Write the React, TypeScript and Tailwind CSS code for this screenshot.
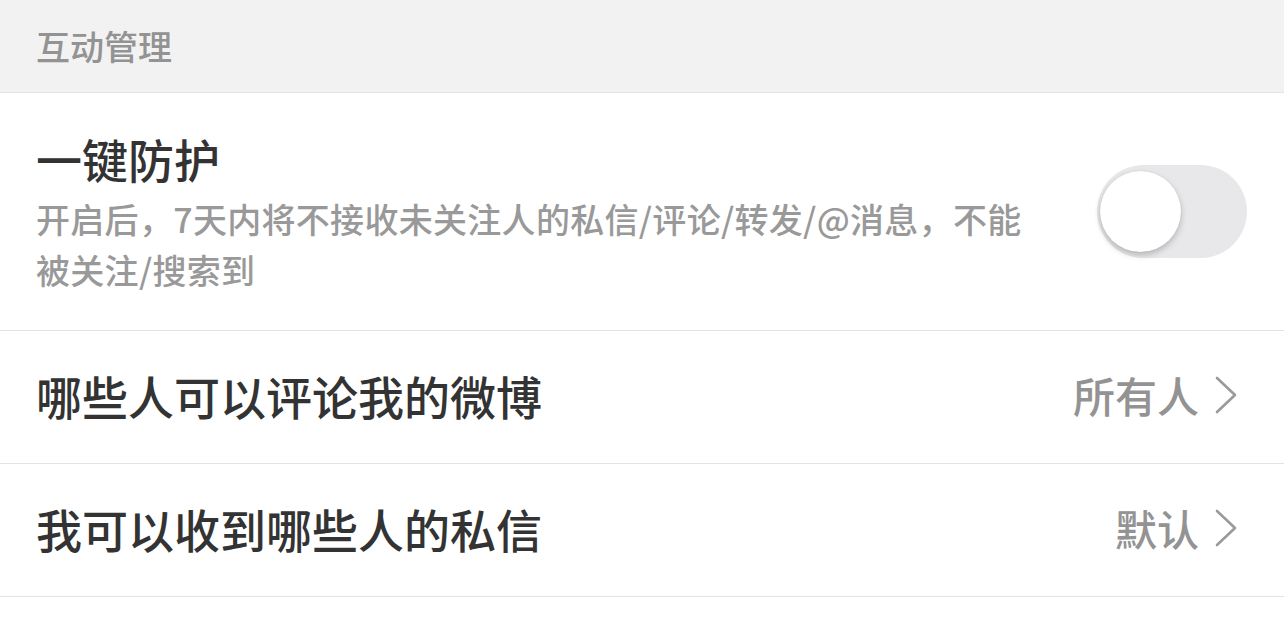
import React from "react";

const font = { fontFamily: '"Noto Sans CJK SC", "Noto Sans", sans-serif' };

function Chevron() {
  return (
    <svg width="24" height="38" viewBox="0 0 24 38" className="shrink-0">
      <path d="M3 2 L21 19 L3 36" fill="none" stroke="#9a9a9a" strokeWidth="2.6" strokeLinecap="round" strokeLinejoin="round" />
    </svg>
  );
}

function NavRow({ title, value }: { title: string; value: string }) {
  return (
    <div className="flex h-[133px] items-center justify-between border-b border-[#e3e3e3] pb-[4px] pl-[36px] pr-[46px]">
      <span className="text-[46px] font-medium leading-none text-[#333333]">{title}</span>
      <div className="flex items-center gap-[15px]">
        <span className="text-[42px] font-medium leading-none text-[#939393]">{value}</span>
        <Chevron />
      </div>
    </div>
  );
}

export default function App() {
  return (
    <div className="min-h-[624px] w-full bg-white" style={font}>
      <div className="flex h-[93px] items-center border-b border-[#e3e3e3] bg-[#f2f2f2] pl-[36px]">
        <span className="text-[34px] font-medium leading-none text-[#939393]">互动管理</span>
      </div>
      <div className="flex h-[238px] items-center justify-between border-b border-[#e3e3e3] pl-[36px] pr-[37px]">
        <div className="flex flex-col">
          <span className="text-[46px] font-medium leading-[60px] text-[#333333]">一键防护</span>
          <div className="mt-[5px] text-[34px] font-medium leading-[51px] tracking-[0.3px] text-[#999999]">
            <div className="whitespace-nowrap">开启后，7天内将不接收未关注人的私信/评论/转发/@消息，不能</div>
            <div className="whitespace-nowrap">被关注/搜索到</div>
          </div>
        </div>
        <div className="relative h-[93px] w-[150px] shrink-0 rounded-full bg-[#e8e8ea]">
          <div className="absolute left-[3px] top-[6px] h-[81px] w-[81px] rounded-full bg-white shadow-[0_3px_6px_rgba(0,0,0,0.22),0_0_1px_rgba(0,0,0,0.15)]" />
        </div>
      </div>
      <NavRow title="哪些人可以评论我的微博" value="所有人" />
      <NavRow title="我可以收到哪些人的私信" value="默认" />
    </div>
  );
}
